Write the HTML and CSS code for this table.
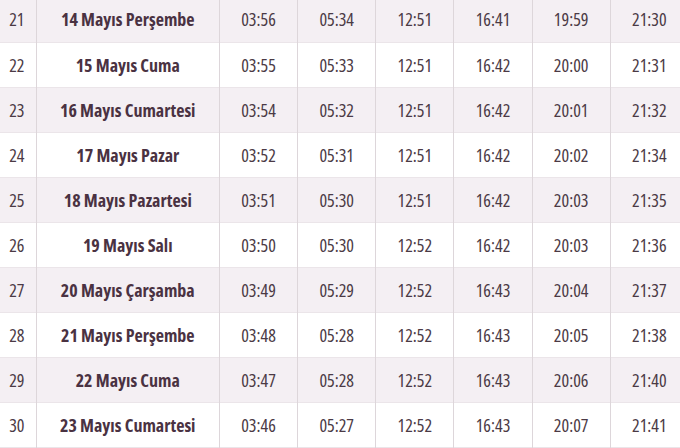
FILE: index.html
```html
<!DOCTYPE html>
<html lang="tr">
<head>
<meta charset="utf-8">
<link rel="stylesheet" href="styles.css">
</head>
<body>
<table class="times">
  <colgroup>
    <col class="c-num"><col class="c-name"><col class="c-t"><col class="c-t"><col class="c-t"><col class="c-t"><col class="c-t"><col class="c-t">
  </colgroup>
  <tbody>
    <tr class="odd"><td class="num">21</td><td class="name">14 Mayıs Perşembe</td><td>03:56</td><td>05:34</td><td>12:51</td><td>16:41</td><td>19:59</td><td>21:30</td></tr>
    <tr><td class="num">22</td><td class="name">15 Mayıs Cuma</td><td>03:55</td><td>05:33</td><td>12:51</td><td>16:42</td><td>20:00</td><td>21:31</td></tr>
    <tr class="odd"><td class="num">23</td><td class="name">16 Mayıs Cumartesi</td><td>03:54</td><td>05:32</td><td>12:51</td><td>16:42</td><td>20:01</td><td>21:32</td></tr>
    <tr><td class="num">24</td><td class="name">17 Mayıs Pazar</td><td>03:52</td><td>05:31</td><td>12:51</td><td>16:42</td><td>20:02</td><td>21:34</td></tr>
    <tr class="odd"><td class="num">25</td><td class="name">18 Mayıs Pazartesi</td><td>03:51</td><td>05:30</td><td>12:51</td><td>16:42</td><td>20:03</td><td>21:35</td></tr>
    <tr><td class="num">26</td><td class="name">19 Mayıs Salı</td><td>03:50</td><td>05:30</td><td>12:52</td><td>16:42</td><td>20:03</td><td>21:36</td></tr>
    <tr class="odd"><td class="num">27</td><td class="name">20 Mayıs Çarşamba</td><td>03:49</td><td>05:29</td><td>12:52</td><td>16:43</td><td>20:04</td><td>21:37</td></tr>
    <tr><td class="num">28</td><td class="name">21 Mayıs Perşembe</td><td>03:48</td><td>05:28</td><td>12:52</td><td>16:43</td><td>20:05</td><td>21:38</td></tr>
    <tr class="odd"><td class="num">29</td><td class="name">22 Mayıs Cuma</td><td>03:47</td><td>05:28</td><td>12:52</td><td>16:43</td><td>20:06</td><td>21:40</td></tr>
    <tr><td class="num">30</td><td class="name">23 Mayıs Cumartesi</td><td>03:46</td><td>05:27</td><td>12:52</td><td>16:43</td><td>20:07</td><td>21:41</td></tr>
  </tbody>
</table>
</body>
</html>
```
FILE: styles.css
```css
html, body {
  margin: 0;
  padding: 0;
  background: #ffffff;
  overflow: hidden;
}
.times {
  border-collapse: collapse;
  table-layout: fixed;
  width: 691px;
  margin: -3px 0 0 -2px;
  font-family: "Open Sans", "Roboto", sans-serif;
  font-stretch: 75%;
  font-size: 18px;
  color: #4b3a45;
}
.c-num { width: 38px; }
.c-name { width: 183px; }
.c-t { width: 78px; }
.times tr {
  height: 45px;
  background: #ffffff;
  border-bottom: 1px solid #ebe5e9;
}
.times tr.odd {
  background: #f4eff3;
}
.times td {
  padding: 0;
  text-align: center;
  vertical-align: middle;
  border-left: 1px solid #ddd6da;
  border-right: 1px solid #ddd6da;
  white-space: nowrap;
}
.times td.num {
  border-left: none;
}
.times td.name {
  font-weight: 700;
  color: #4a3242;
}
```
